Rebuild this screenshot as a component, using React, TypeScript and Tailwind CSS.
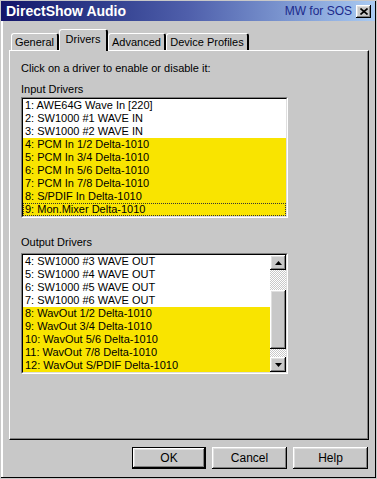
import React from 'react';

const inputDrivers = [
  { name: '1: AWE64G Wave In [220]', on: false },
  { name: '2: SW1000 #1 WAVE IN', on: false },
  { name: '3: SW1000 #2 WAVE IN', on: false },
  { name: '4: PCM In 1/2 Delta-1010', on: true },
  { name: '5: PCM In 3/4 Delta-1010', on: true },
  { name: '6: PCM In 5/6 Delta-1010', on: true },
  { name: '7: PCM In 7/8 Delta-1010', on: true },
  { name: '8: S/PDIF In Delta-1010', on: true },
  { name: '9: Mon.Mixer Delta-1010', on: true, focus: true },
];

const outputDrivers = [
  { name: '4: SW1000 #3 WAVE OUT', on: false },
  { name: '5: SW1000 #4 WAVE OUT', on: false },
  { name: '6: SW1000 #5 WAVE OUT', on: false },
  { name: '7: SW1000 #6 WAVE OUT', on: false },
  { name: '8: WavOut 1/2 Delta-1010', on: true },
  { name: '9: WavOut 3/4 Delta-1010', on: true },
  { name: '10: WavOut 5/6 Delta-1010', on: true },
  { name: '11: WavOut 7/8 Delta-1010', on: true },
  { name: '12: WavOut S/PDIF Delta-1010', on: true },
];

const raised =
  'shadow-[inset_-1px_-1px_#000,inset_1px_1px_#fff,inset_-2px_-2px_#808080,inset_2px_2px_#dfdfdf]';

function Arrow({ down }: { down?: boolean }) {
  return (
    <svg width="7" height="4" viewBox="0 0 7 4" className={down ? 'rotate-180' : ''}>
      <path d="M3.5 0 L7 4 L0 4 Z" fill="#000" />
    </svg>
  );
}

function Scrollbar() {
  const track =
    'bg-[repeating-conic-gradient(#c8c8c8_0%_25%,#ffffff_0%_50%)] bg-[length:2px_2px]';
  return (
    <div className="w-[16px] flex flex-col shrink-0">
      <div className={`h-[15px] bg-[#c8c8c8] flex items-center justify-center ${raised}`}>
        <Arrow />
      </div>
      <div className={`h-[20px] ${track}`} />
      <div className={`h-[59px] bg-[#c8c8c8] ${raised}`} />
      <div className={`h-[8px] ${track}`} />
      <div className={`h-[15px] bg-[#c8c8c8] flex items-center justify-center ${raised}`}>
        <Arrow down />
      </div>
    </div>
  );
}

type Driver = { name: string; on: boolean; focus?: boolean };

function DriverList({ items, scroll }: { items: Driver[]; scroll?: boolean }) {
  return (
    <div className="w-[267px] border border-t-[#808080] border-l-[#808080] border-r-white border-b-white">
      <div className="flex border border-t-black border-l-black border-r-[#dfdfdf] border-b-[#dfdfdf] bg-white">
        <div className="flex-1 flex flex-col">
          {items.map((d) => (
            <div
              key={d.name}
              className={`h-[13px] leading-[13px] pl-[2px] text-[11px] text-black whitespace-nowrap ${
                d.on ? 'bg-[#f9e400]' : 'bg-white'
              } ${d.focus ? 'outline outline-1 outline-dotted outline-[#333] -outline-offset-1' : ''}`}
            >
              {d.name}
            </div>
          ))}
        </div>
        {scroll && <Scrollbar />}
      </div>
    </div>
  );
}

function Tab({ label, width, active }: { label: string; width: string; active?: boolean }) {
  return (
    <div
      className={`${width} ${
        active ? 'h-[22px] -mb-px z-10 pt-[3px]' : 'h-[17px] pt-[2px]'
      } relative bg-[#c8c8c8] border-t border-l border-white border-r-2 border-r-black rounded-t-[3px] flex justify-center text-[11px] leading-[13px] text-black whitespace-nowrap`}
    >
      {label}
    </div>
  );
}

function Button({ label, def, width }: { label: string; def?: boolean; width: string }) {
  if (def) {
    return (
      <div className={`${width} h-[22px] border border-black`}>
        <div className={`h-full bg-[#c8c8c8] flex items-center justify-center text-[12px] ${raised}`}>
          {label}
        </div>
      </div>
    );
  }
  return (
    <div className={`${width} h-[22px] bg-[#c8c8c8] flex items-center justify-center text-[12px] ${raised}`}>
      {label}
    </div>
  );
}

export default function App() {
  return (
    <div className="w-[377px] h-[479px] bg-[#c8c8c8] pt-px pl-px font-['Liberation_Sans',Arial,sans-serif] text-black">
      <div className="w-[375px] h-[477px] border-r border-b border-black flex flex-col">
        {/* title bar */}
        <div className="h-[20px] flex items-center pl-[5px] pr-[4px] bg-linear-to-r from-[#14146a] via-[#4f5fab] to-[#aacbf2]">
          <span className="text-white font-bold text-[14px] leading-[16px]">DirectShow Audio</span>
          <span className="ml-auto text-[#1c2a8c] text-[12px] leading-[14px]">MW for SOS</span>
          <div className={`ml-[4px] w-[15px] h-[13px] bg-[#c8c8c8] flex items-center justify-center ${raised}`}>
            <svg width="8" height="7" viewBox="0 0 8 7">
              <path d="M0.5 0.5 L7.5 6.5 M7.5 0.5 L0.5 6.5" stroke="#000" strokeWidth="1.6" />
            </svg>
          </div>
        </div>

        <div className="flex-1 border-l-2 border-white pl-[6px] pt-[8px]">
          {/* tabs */}
          <div className="flex items-end h-[21px] pl-[2px]">
            <Tab label="General" width="w-[48px]" />
            <Tab label="Drivers" width="w-[49px]" active />
            <Tab label="Advanced" width="w-[58px]" />
            <Tab label="Device Profiles" width="w-[83px]" />
          </div>

          {/* panel */}
          <div className="w-[360px] h-[390px] border-t border-l border-white border-r border-b border-r-black border-b-black">
            <div className="h-full pl-[11px] pt-[11px] shadow-[inset_-1px_-1px_#808080]">
              <div className="text-[11px] leading-[13px]">Click on a driver to enable or disable it:</div>
              <div className="text-[11px] leading-[13px] mt-[8px]">Input Drivers</div>
              <div className="mt-[1px]">
                <DriverList items={inputDrivers} />
              </div>
              <div className="text-[11px] leading-[13px] mt-[18px]">Output Drivers</div>
              <div className="mt-[4px]">
                <DriverList items={outputDrivers} scroll />
              </div>
            </div>
          </div>

          {/* buttons */}
          <div className="w-[360px] flex justify-end gap-[6px] mt-[7px] pr-px">
            <Button label="OK" width="w-[74px]" def />
            <Button label="Cancel" width="w-[75px]" />
            <Button label="Help" width="w-[75px]" />
          </div>
        </div>
      </div>
    </div>
  );
}
